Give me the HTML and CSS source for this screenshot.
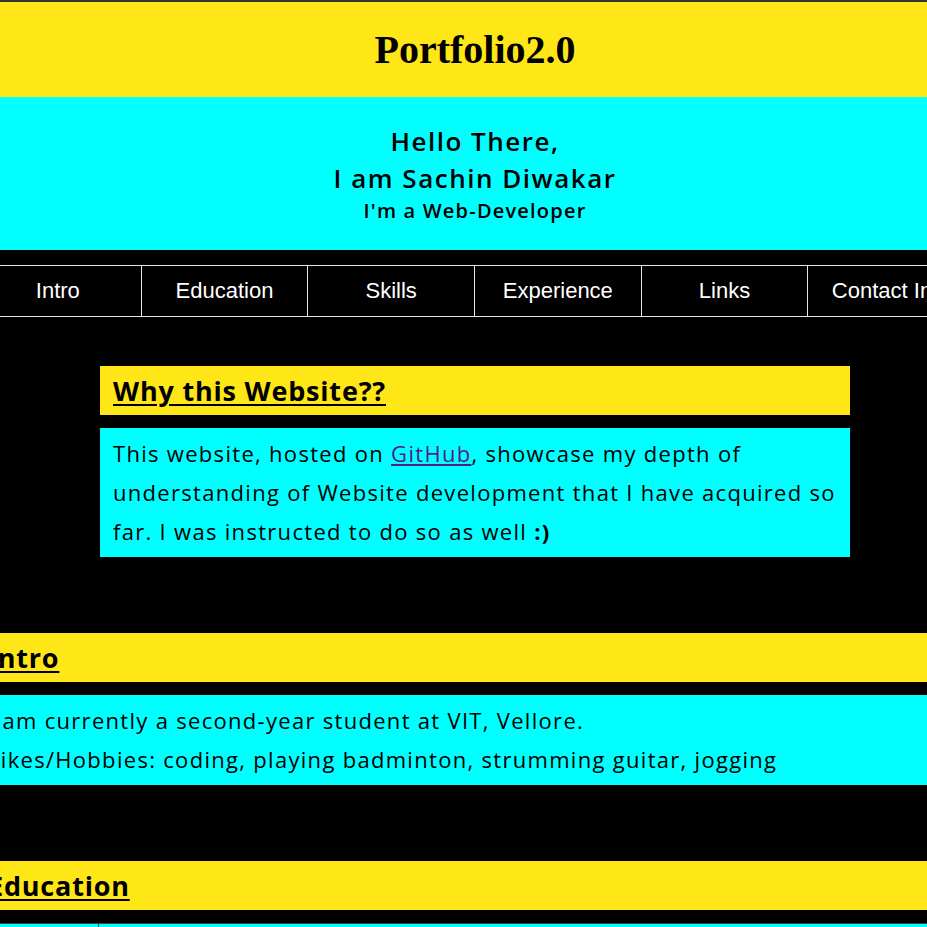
FILE: index.html
```html
<!DOCTYPE html>
<html lang="en">
<head>
<meta charset="utf-8">
<title>Portfolio2.0</title>
<link rel="stylesheet" href="styles.css">
</head>
<body>
<div class="page">
  <header class="masthead">
    <h1 class="site-title">Portfolio2.0</h1>
  </header>
  <section class="hero">
    <div class="hero-line big">Hello There,</div>
    <div class="hero-line big">I am Sachin Diwakar</div>
    <div class="hero-line small">I'm a Web-Developer</div>
  </section>
  <nav class="nav">
    <a class="nav-item" href="#intro">Intro</a>
    <a class="nav-item" href="#education">Education</a>
    <a class="nav-item" href="#skills">Skills</a>
    <a class="nav-item" href="#experience">Experience</a>
    <a class="nav-item" href="#links">Links</a>
    <a class="nav-item" href="#contact">Contact Info</a>
  </nav>

  <section class="why">
    <h2 class="sec-head"><u>Why this Website??</u></h2>
    <div class="sec-body">
      <p class="txt">This website, hosted on <a class="gh" href="#">GitHub</a>, showcase my depth of understanding of Website development that I have acquired so far. I was instructed to do so as well <b>:)</b></p>
    </div>
  </section>

  <section class="block" id="intro">
    <h2 class="sec-head"><u>Intro</u></h2>
    <div class="sec-body">
      <p class="txt">I am currently a second-year student at VIT, Vellore.<br>Likes/Hobbies: coding, playing badminton, strumming guitar, jogging</p>
    </div>
  </section>

  <section class="block" id="education">
    <h2 class="sec-head"><u>Education</u></h2>
    <table class="edu">
      <tr><td class="c1">&nbsp;</td><td>&nbsp;</td></tr>
    </table>
  </section>
</div>
</body>
</html>
```
FILE: styles.css
```css
html, body {
  margin: 0;
  padding: 0;
  background: #000;
  overflow: hidden;
}
.page {
  width: 1000px;
  margin-left: -25px;
  border-top: 2px solid #333;
}
.masthead {
  background: #ffe616;
  height: 95px;
  display: flex;
  align-items: center;
  justify-content: center;
}
.site-title {
  margin: 0;
  font-family: "Liberation Serif", serif;
  font-weight: 700;
  font-size: 40px;
  color: #000;
}
.hero {
  background: #00ffff;
  padding: 26px 0 25px;
  text-align: center;
  font-family: "Open Sans", sans-serif;
  font-weight: 600;
  color: #000;
}
.hero-line.big {
  font-size: 26px;
  line-height: 37px;
  letter-spacing: 1.5px;
}
.hero-line.small {
  font-size: 20px;
  line-height: 28px;
  letter-spacing: 1.2px;
}
.nav {
  margin-top: 15px;
  display: grid;
  grid-template-columns: repeat(6, 1fr);
  border-top: 1px solid #e6e6e6;
  border-bottom: 1px solid #e6e6e6;
}
.nav-item {
  height: 50px;
  display: flex;
  align-items: center;
  justify-content: center;
  color: #fff;
  text-decoration: none;
  font-family: "Liberation Sans", Arial, sans-serif;
  font-size: 22px;
  border-right: 1px solid #e6e6e6;
  white-space: nowrap;
}
.why {
  width: 750px;
  margin: 49px auto 0;
}
.sec-head {
  margin: 0;
  background: #ffe616;
  height: 49px;
  padding-left: 13px;
  display: flex;
  align-items: center;
  font-family: "Open Sans", sans-serif;
  font-weight: 700;
  font-size: 27px;
  letter-spacing: 0.8px;
  color: #000;
}
.sec-head u {
  text-decoration-thickness: 2px;
  text-underline-offset: 3px;
}
.sec-body {
  margin-top: 13px;
  background: #00ffff;
  padding: 6px 0 6px 13px;
}
.txt {
  margin: 0;
  font-family: "Open Sans", sans-serif;
  font-size: 22px;
  line-height: 39px;
  letter-spacing: 1.3px;
  color: #000;
}
.gh {
  color: #551a8b;
}
.block {
  margin-top: 76px;
}
.edu {
  margin-top: 13px;
  width: 100%;
  border-collapse: collapse;
  border-top: 1px solid #888;
  background: #00ffff;
}
.edu td {
  height: 40px;
  border: 1px solid #444;
}
.edu .c1 {
  width: 120px;
}
```
